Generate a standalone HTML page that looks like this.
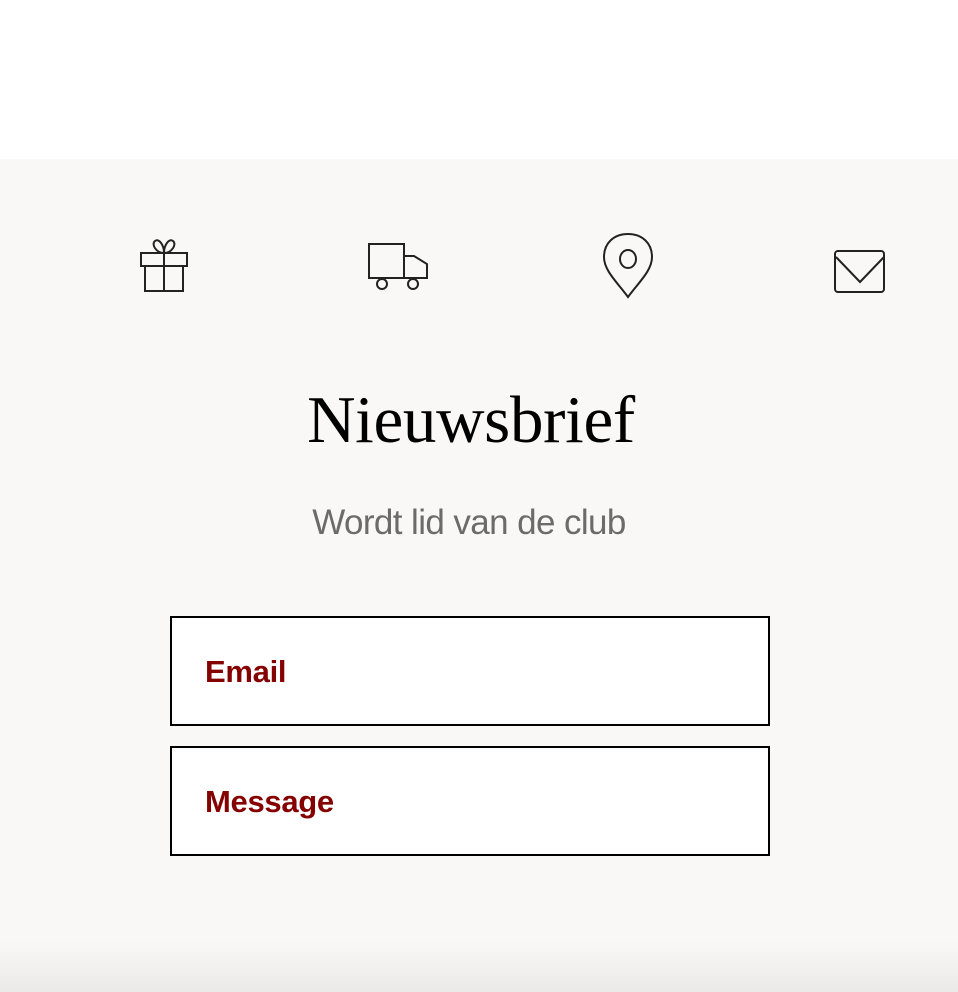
<!DOCTYPE html>
<html><head><meta charset="utf-8"><style>
html,body{margin:0;padding:0;width:958px;height:992px;overflow:hidden;background:#fff;font-family:"Liberation Sans",sans-serif}
.sec{position:absolute;left:0;top:159px;width:958px;height:833px;background:#f9f8f6}
.shade{position:absolute;left:0;top:940px;width:958px;height:52px;background:linear-gradient(to bottom,rgba(0,0,0,0),rgba(0,0,0,0.06))}
svg.i{position:absolute;left:0;top:0;fill:none;stroke:#222;stroke-width:2}
h1{position:absolute;left:-8px;width:958px;top:380px;margin:0;text-align:center;font-family:"Liberation Serif",serif;font-weight:normal;font-size:67px;color:#000;line-height:80px;letter-spacing:-0.3px}
.sub{position:absolute;left:-10px;width:958px;top:502px;text-align:center;font-size:35px;color:#6b6b6b;line-height:42px;letter-spacing:-0.6px}
.in{position:absolute;left:170px;width:596px;height:106px;border:2px solid #000;background:#fff}
.in span{position:absolute;left:33px;top:36px;font-size:31px;font-weight:bold;color:#850000;letter-spacing:-0.3px}
</style></head><body>
<div class="sec"></div>
<div class="shade"></div>
<svg class="i" width="958" height="400" viewBox="0 0 958 400">
<rect x="141" y="253" width="46" height="13"/><rect x="145" y="266" width="38" height="25"/><line x1="164" y1="253" x2="164" y2="291"/>
<path d="M164 253C156 253 151 244 155 241C159 238 164 245 164 253C164 245 169 238 173 241C177 244 172 253 164 253"/>
<rect x="369" y="244" width="35" height="34"/><path d="M404 278V256H414L427 264V278Z"/>
<circle cx="382" cy="284" r="5"/><circle cx="413" cy="284" r="5"/>
<path d="M628 297C618 283 604 271 604 257C604 243 614 234 628 234C642 234 652 243 652 257C652 271 638 283 628 297Z"/><ellipse cx="628" cy="259" rx="8" ry="9"/>
<rect x="835" y="251" width="49" height="41" rx="3"/><path d="M836 257L860 282L884 257"/>
</svg>
<h1>Nieuwsbrief</h1>
<div class="sub">Wordt lid van de club</div>
<div class="in" style="top:616px"><span>Email</span></div>
<div class="in" style="top:746px"><span>Message</span></div>
</body></html>
